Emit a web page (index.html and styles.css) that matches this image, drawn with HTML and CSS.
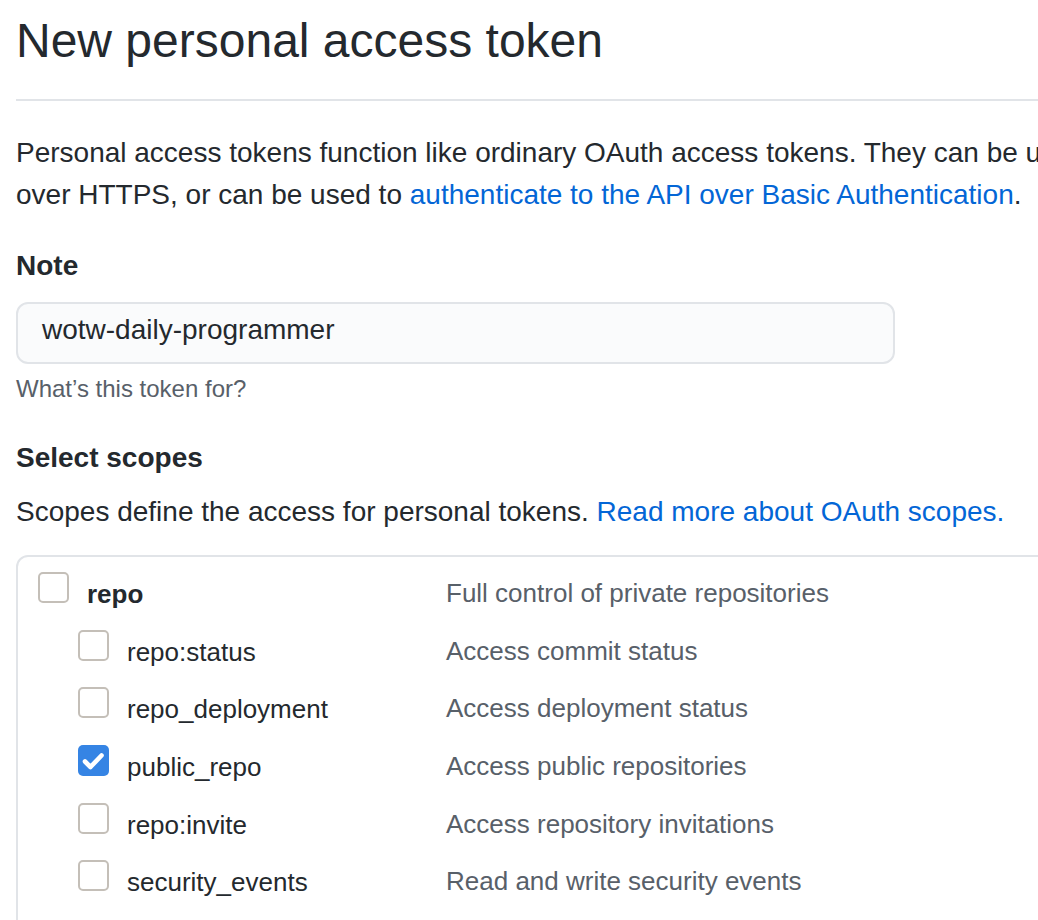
FILE: index.html
```html
<!DOCTYPE html>
<html lang="en">
<head>
<meta charset="utf-8">
<title>New personal access token</title>
<link rel="stylesheet" href="styles.css">
</head>
<body>
<div class="page">
  <div class="subhead">
    <h1 class="subhead-title">New personal access token</h1>
  </div>

  <p class="intro">Personal access tokens function like ordinary OAuth access tokens. They can be used instead of a password for Git<br>over HTTPS, or can be used to <a href="#" class="link">authenticate to the API over Basic Authentication</a>.</p>

  <div class="form-group">
    <label class="label">Note</label>
    <div class="input">wotw-daily-programmer</div>
    <p class="note">What’s this token for?</p>
  </div>

  <h2 class="label scopes-title">Select scopes</h2>
  <p class="scopes-desc">Scopes define the access for personal tokens. <a href="#" class="link">Read more about OAuth scopes.</a></p>

  <div class="scopes">
    <div class="scope-row">
      <div class="scope-name top"><span class="checkbox"></span><b>repo</b></div>
      <div class="scope-desc">Full control of private repositories</div>
    </div>
    <div class="scope-row">
      <div class="scope-name sub"><span class="checkbox"></span>repo:status</div>
      <div class="scope-desc">Access commit status</div>
    </div>
    <div class="scope-row">
      <div class="scope-name sub"><span class="checkbox"></span>repo_deployment</div>
      <div class="scope-desc">Access deployment status</div>
    </div>
    <div class="scope-row">
      <div class="scope-name sub"><span class="checkbox checked"><svg viewBox="0 0 31 31" width="31" height="31"><path d="M7 16.5 L12.5 22 L23.5 10.5" fill="none" stroke="#fff" stroke-width="4.6" stroke-linecap="round" stroke-linejoin="round"/></svg></span>public_repo</div>
      <div class="scope-desc">Access public repositories</div>
    </div>
    <div class="scope-row">
      <div class="scope-name sub"><span class="checkbox"></span>repo:invite</div>
      <div class="scope-desc">Access repository invitations</div>
    </div>
    <div class="scope-row">
      <div class="scope-name sub"><span class="checkbox"></span>security_events</div>
      <div class="scope-desc">Read and write security events</div>
    </div>
  </div>
</div>
</body>
</html>
```

FILE: styles.css
```css
html, body {
  margin: 0;
  padding: 0;
  background: #ffffff;
  overflow: hidden;
}

body {
  font-family: "Liberation Sans", Arial, Helvetica, sans-serif;
  font-size: 28px;
  line-height: 42px;
  color: #24292e;
}

.page {
  width: 1600px;
  padding-left: 16px;
}

.subhead {
  padding-top: 11px;
  padding-bottom: 28px;
  border-bottom: 2px solid #e1e4e8;
}

.subhead-title {
  margin: 0;
  font-size: 48px;
  line-height: 60px;
  font-weight: 400;
}

.intro {
  margin: 31px 0 0 0;
  white-space: nowrap;
}

.link {
  color: #0366d6;
  text-decoration: none;
}

.form-group {
  margin-top: 29px;
}

.label {
  display: block;
  margin: 0;
  font-size: 28px;
  line-height: 42px;
  font-weight: 700;
}

.input {
  margin-top: 15px;
  width: 879px;
  height: 62px;
  box-sizing: border-box;
  padding: 5px 24px 0 24px;
  border: 2px solid #e1e4e8;
  border-radius: 12px;
  background: #fafbfc;
  font-size: 28px;
  line-height: 42px;
  color: #24292e;
}

.note {
  margin: 7px 0 0 0;
  font-size: 24px;
  line-height: 36px;
  color: #586069;
}

.scopes-title {
  margin-top: 30px;
}

.scopes-desc {
  margin: 12px 0 0 0;
  white-space: nowrap;
}

.scopes {
  margin-top: 22px;
  width: 1400px;
  height: 600px;
  border: 2px solid #e1e4e8;
  border-radius: 12px;
  padding-top: 7.3px;
  box-sizing: border-box;
  font-size: 26px;
}

.scope-row {
  display: grid;
  grid-template-columns: 428px 1fr;
  height: 57.6px;
  box-sizing: border-box;
  padding-top: 8px;
  line-height: 42px;
}

.scope-name {
  white-space: nowrap;
}

.scope-name.top {
  padding-left: 20px;
}

.scope-name.sub {
  padding-left: 60px;
}

.scope-name b {
  font-weight: 700;
}

.scope-desc {
  color: #586069;
  white-space: nowrap;
}

.checkbox {
  display: inline-block;
  width: 31px;
  height: 31px;
  box-sizing: border-box;
  margin-right: 18px;
  border: 2px solid #c4bfb8;
  border-radius: 5px;
  background: #ffffff;
  vertical-align: baseline;
}

.checkbox.checked {
  border: none;
  background: #3584e4;
  position: relative;
}

.checkbox.checked svg {
  position: absolute;
  left: 0;
  top: 0;
  display: block;
}
```
